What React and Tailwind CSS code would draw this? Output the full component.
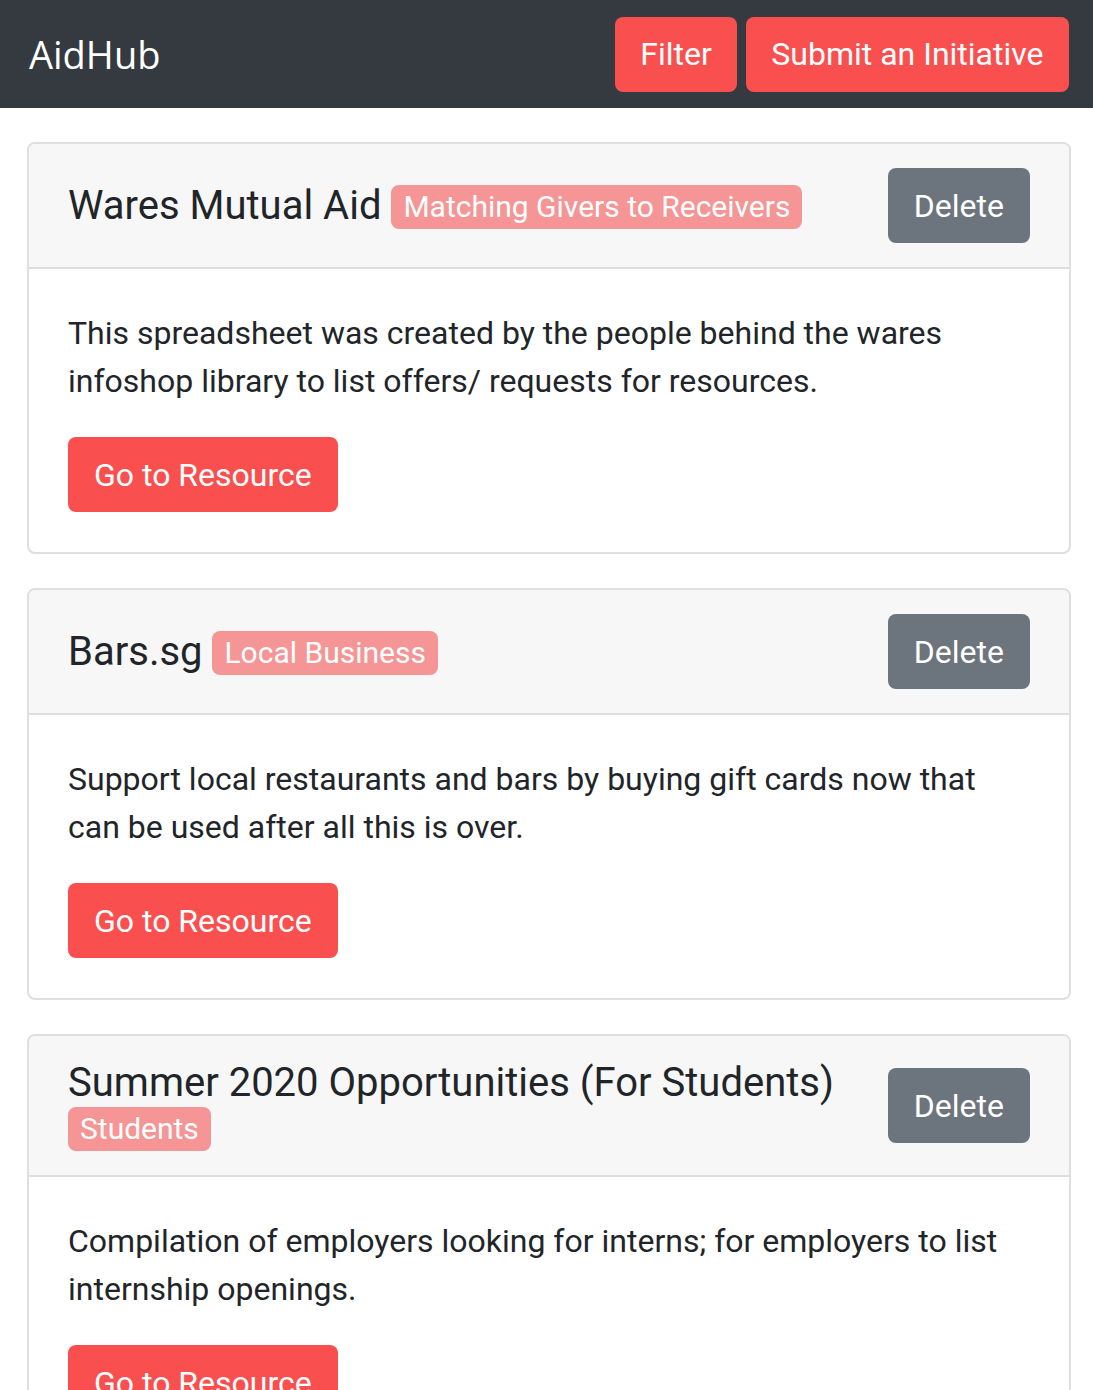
const initiatives = [
  {
    title: 'Wares Mutual Aid',
    tag: 'Matching Givers to Receivers',
    text: 'This spreadsheet was created by the people behind the wares infoshop library to list offers/ requests for resources.',
  },
  {
    title: 'Bars.sg',
    tag: 'Local Business',
    text: 'Support local restaurants and bars by buying gift cards now that can be used after all this is over.',
  },
  {
    title: 'Summer 2020 Opportunities (For Students)',
    tag: 'Students',
    text: 'Compilation of employers looking for interns; for employers to list internship openings.',
  },
];

function InitiativeCard({ item }) {
  return (
    <div className="mt-[34px] border-2 border-[#dfdfdf] rounded-[8px] overflow-hidden bg-white">
      <div className="flex items-center justify-between bg-[#f7f7f7] border-b-2 border-[#dfdfdf] pl-[39px] pr-[39px] py-[24px]">
        <h5 className="text-[40px] leading-[45px] text-[#212529] pr-[20px]">
          {item.title}{' '}
          <span className="inline-block align-[2px] bg-[#f59595] text-white text-[30px] leading-[30px] px-[12px] py-[7px] rounded-[8px]">
            {item.tag}
          </span>
        </h5>
        <button className="shrink-0 h-[75px] px-[26px] bg-[#6c757d] text-white text-[32px] rounded-[8px]">
          Delete
        </button>
      </div>
      <div className="pl-[39px] pr-[40px] py-[40px]">
        <p className="text-[32px] leading-[48px] text-[#212529] mb-[32px]">{item.text}</p>
        <button className="h-[75px] px-[26px] bg-[#f94f4f] text-white text-[32px] rounded-[8px]">
          Go to Resource
        </button>
      </div>
    </div>
  );
}

export default function App() {
  return (
    <div className="min-h-[1390px] bg-white" style={{ fontFamily: 'Roboto, "Liberation Sans", sans-serif' }}>
      <nav className="h-[108px] bg-[#343a40] flex items-center justify-between pl-[29px] pr-[24px]">
        <span className="text-white text-[38px] font-['Open_Sans',sans-serif]">AidHub</span>
        <div className="flex gap-[9px]">
          <button className="h-[75px] px-[25px] bg-[#f94f4f] text-white text-[32px] rounded-[8px]">Filter</button>
          <button className="h-[75px] px-[25.5px] bg-[#f94f4f] text-white text-[32px] rounded-[8px]">
            Submit an Initiative
          </button>
        </div>
      </nav>
      <div className="ml-[27px] mr-[22px]">
        {initiatives.map((item) => (
          <InitiativeCard key={item.title} item={item} />
        ))}
      </div>
    </div>
  );
}
